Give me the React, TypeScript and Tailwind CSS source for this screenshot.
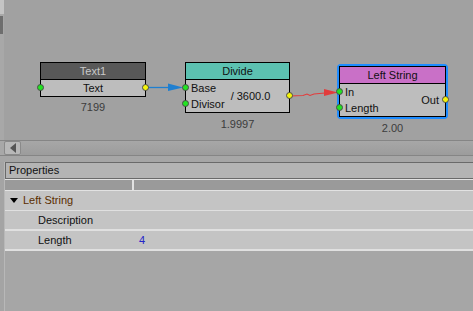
import React from "react";

function Port({ color, side, top }: { color: "green" | "yellow"; side: "left" | "right"; top: number }) {
  return (
    <span
      className={`absolute h-[7px] w-[7px] rounded-full border border-[#4a4a4a] ${
        color === "green" ? "bg-[#22e322]" : "bg-[#f4f40a]"
      } ${side === "left" ? "left-[-4px]" : "right-[-4px]"}`}
      style={{ top }}
    />
  );
}

export default function App() {
  return (
    <div
      className="flex h-[311px] w-[473px] flex-col overflow-hidden bg-[#a6a6a6] text-[11px] text-[#111]"
      style={{ fontFamily: '"Liberation Sans", Arial, sans-serif' }}
    >
      {/* canvas */}
      <div className="flex h-[140px]">
        <div className="flex w-[4px] flex-col bg-[#a8a8a8]">
          <div className="h-[14px] bg-[#c4c4c4]" />
          <div className="mt-[2px] h-[18px] w-[3px] bg-[#6e6e6e]" />
        </div>
        <div className="relative flex-1 bg-[#a1a1a1]">
          <svg className="absolute left-0 top-0" width="469" height="140">
            <line x1="141" y1="87.5" x2="170" y2="87.5" stroke="#1f7fd0" strokeWidth="1.3" />
            <polygon points="164,83.5 179,87.5 164,91" fill="#1f7fd0" />
            <path d="M286 96 L299 95.5 L303 94 L306 95.5 L310 94 L321 93" stroke="#e23c3c" strokeWidth="1.1" fill="none" />
            <polygon points="320,89 334,92.5 320,96" fill="#e23c3c" />
          </svg>

          {/* Text1 */}
          <div className="absolute left-[36px] top-[62px] flex w-[106px] flex-col items-center">
            <div className="relative w-full border border-black">
              <div className="flex h-[16px] items-center justify-center bg-[#585858] text-[#c9c9c9]">Text1</div>
              <div className="relative flex h-[17px] items-center justify-center border-t border-black bg-[#bdbdbd]">
                Text
                <Port color="green" side="left" top={4} />
                <Port color="yellow" side="right" top={4} />
              </div>
            </div>
            <div className="mt-[2px] text-[#3c3c3c]">7199</div>
          </div>

          {/* Divide */}
          <div className="absolute left-[181px] top-[62px] flex w-[105px] flex-col items-center">
            <div className="w-full border border-black">
              <div className="flex h-[16px] items-center justify-center bg-[#5cc1b1]">Divide</div>
              <div className="relative flex h-[33px] border-t border-black bg-[#bdbdbd]">
                <div className="flex flex-col pl-[5px]">
                  <span className="flex h-[16px] items-center">Base</span>
                  <span className="flex h-[16px] items-center">Divisor</span>
                </div>
                <div className="flex items-center pl-[6px]">/ 3600.0</div>
                <Port color="green" side="left" top={4} />
                <Port color="green" side="left" top={20} />
                <Port color="yellow" side="right" top={12} />
              </div>
            </div>
            <div className="mt-[3px] text-[#3c3c3c]">1.9997</div>
          </div>

          {/* Left String (selected) */}
          <div className="absolute left-[333px] top-[64px] flex w-[111px] flex-col items-center">
            <div className="w-full rounded-[4px] bg-[#1e8cff] p-[2px]">
              <div className="border border-black">
                <div className="flex h-[16px] items-center justify-center bg-[#c970c7]">Left String</div>
                <div className="relative flex h-[33px] border-t border-black bg-[#bdbdbd]">
                  <div className="flex flex-col pl-[5px]">
                    <span className="flex h-[16px] items-center">In</span>
                    <span className="flex h-[16px] items-center">Length</span>
                  </div>
                  <div className="flex flex-1 items-center justify-end pr-[6px]">Out</div>
                  <Port color="green" side="left" top={4} />
                  <Port color="green" side="left" top={20} />
                  <Port color="yellow" side="right" top={12} />
                </div>
              </div>
            </div>
            <div className="mt-[1px] text-[#3c3c3c]">2.00</div>
          </div>
        </div>
      </div>

      {/* horizontal scrollbar */}
      <div className="flex h-[16px] border-y border-[#858585] bg-[#a3a3a3]">
        <div className="w-[4px] bg-[#a8a8a8]" />
        <div className="flex w-[17px] items-center justify-center rounded-[2px] border border-[#8a8a8a] bg-[#b8b8b8]">
          <span className="h-0 w-0 border-y-[5px] border-r-[6px] border-y-transparent border-r-[#555]" />
        </div>
        <div className="flex-1 bg-gradient-to-b from-[#a7a7a7] to-[#9c9c9c]" />
      </div>

      <div className="h-[6px] bg-[#a6a6a6]" />

      {/* properties panel */}
      <div className="flex flex-1">
        <div className="w-[5px] border-r border-[#b8b8b8] bg-[#a4a4a4]" />
        <div className="flex flex-1 flex-col">
          <div className="flex h-[17px] items-center border-y border-l border-[#6a6a6a] bg-[#b4b4b4] pl-[3px]">
            Properties
          </div>
          <div className="flex h-[12px] border-y border-[#e2e2e2] bg-[#9a9a9a]">
            <div className="w-[129px] border-r-2 border-[#e2e2e2]" />
            <div className="flex-1" />
          </div>
          <div className="flex h-[20px] items-center gap-[5px] border-b border-[#e0e0e0] bg-[#c4c4c4] pl-[5px] text-[#5a2e00]">
            <span className="h-0 w-0 border-x-[4px] border-t-[5px] border-x-transparent border-t-black" />
            Left String
          </div>
          <div className="flex h-[20px] items-center border-b-2 border-[#e0e0e0] bg-[#c4c4c4] pl-[33px]">
            Description
          </div>
          <div className="flex h-[20px] items-center border-b-2 border-[#e0e0e0] bg-[#c4c4c4]">
            <span className="w-[134px] pl-[33px]">Length</span>
            <span className="text-[#2424c8]">4</span>
          </div>
          <div className="flex-1 bg-[#a6a6a6]" />
        </div>
      </div>
    </div>
  );
}
